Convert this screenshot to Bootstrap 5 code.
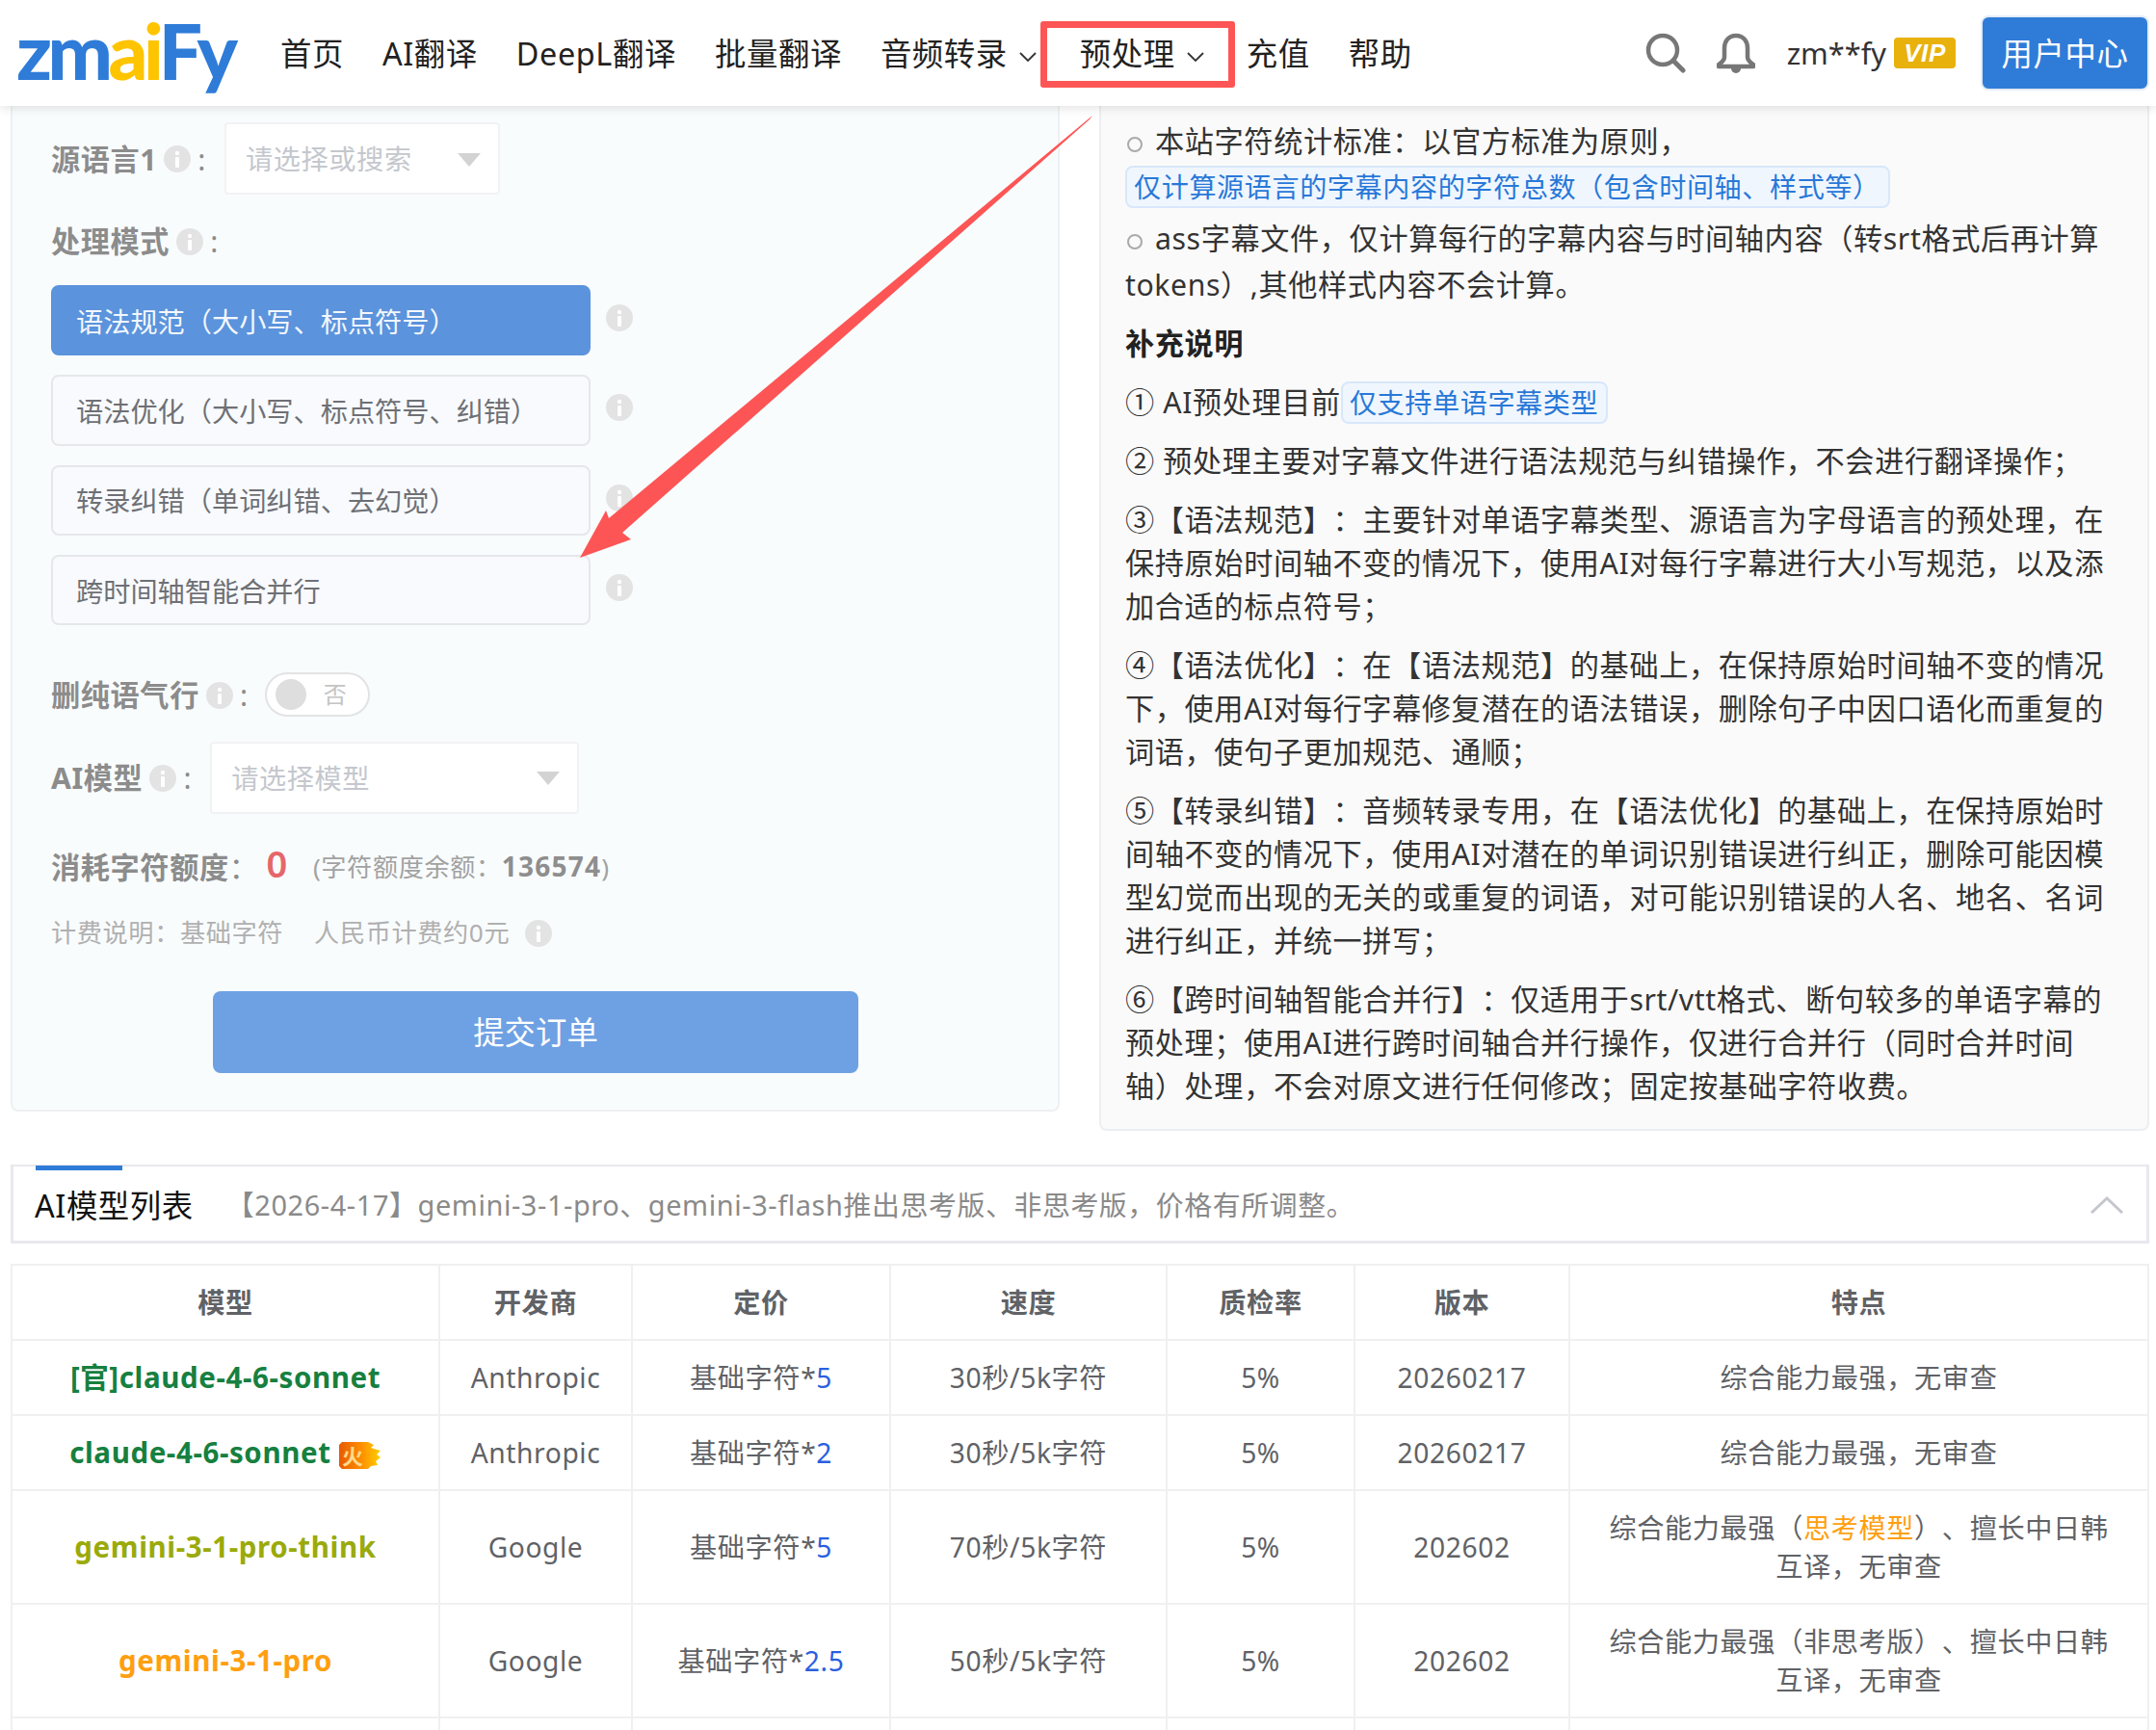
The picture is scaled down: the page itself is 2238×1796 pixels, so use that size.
<!DOCTYPE html>
<html lang="zh-CN">
<head>
<meta charset="UTF-8">
<title>zmaiFy 预处理</title>
<link href="https://cdn.jsdelivr.net/npm/bootstrap@5.3.2/dist/css/bootstrap.min.css" rel="stylesheet">
<style>
  html, body { height: 1796px; overflow: hidden; }
  body { font-family: "Noto Sans", "Noto Sans CJK SC", sans-serif; background: #fff; color: #606266; font-size: 28.2px; letter-spacing: .6px; text-spacing-trim: space-all; position: relative; }

  /* header */
  .top-bar { height: 110px; background: #fff; box-shadow: 0 2px 10px rgba(0,0,0,.12); position: relative; z-index: 2; padding: 0 7px 0 17px; }
  .brand { font-family: Lato, "Liberation Sans", sans-serif; font-weight: 900; font-size: 80px; line-height: 1; letter-spacing: -4.5px; color: #2f7cd8; width: 274px; margin-top: -6px; }
  .brand b { font-weight: 900; color: #ffc400; }
  .menu-link { font-size: 32.4px; color: #222; margin-right: 40px; white-space: nowrap; line-height: 44px; }
  .menu-link svg { margin-left: 12px; }
  .menu-drop { margin-right: 45px; }
  .menu-drop-b { margin-right: 44px; }
  .user-name { font-size: 30.75px; letter-spacing: 0; color: #333; margin: 0 8px 0 33px; }
  .vip-tag { width: 64px; height: 32px; background: #e8b10c; color: #fff; border-radius: 4px; font: italic 700 26px/32px "Liberation Sans", sans-serif; text-align: center; }
  .user-btn { width: 175px; height: 78px; margin-left: 26px; background: #2f7cd8; color: #fff; border: 2px solid #e4ecf6; border-radius: 8px; font-size: 32.4px; line-height: 74px; text-align: center; }

  /* panels */
  .panel-wrap { padding: 0 7px 0 11px; gap: 41px; }
  .form-panel { width: 1089px; height: 1044px; background: #f9fcfd; border: 2px solid #eef0f3; border-top: 0; border-radius: 0 0 8px 8px; padding: 17px 0 0 40px; }
  .help-panel { flex: 1; height: 1064px; background: #fafafa; border: 2px solid #eceef1; border-top: 0; border-radius: 0 0 8px 8px; padding: 14px 26px 0 25px; font-size: 30.2px; line-height: 45px; color: #333; }
  .form-label-x { font-size: 30.2px; font-weight: 700; color: #8c8c8c; white-space: nowrap; display: flex; align-items: center; gap: 7px; padding-top: 2px; }
  .form-label-x i { font-style: normal; font-weight: 400; }
  .form-label-x .colon-tight { margin-left: -7px; }
  .fake-select { height: 75px; margin-left: 19px; background: #fff; border: 2px solid #f1f2f4; border-radius: 4px; padding: 2px 18px 0 20px; color: #c4c7cd; }
  .caret-down { width: 0; height: 0; border: 12px solid transparent; border-top: 14px solid #d3d3d3; border-bottom: 0; }
  .mode-row { height: 73.33px; margin-bottom: 20px; }
  .mode-btn { width: 560px; height: 100%; border: 2px solid #e5e7ea; border-radius: 8px; background: #f8fafd; padding: 2px 0 0 24px; color: #6e7075; }
  .mode-btn.is-on { background: #5b93dc; border-color: #5b93dc; color: #f3f7fd; }
  .tip-dot { flex: none; width: 28px; height: 28px; }
  .mode-row .tip-dot { margin-bottom: 5px; }
  .switch-x { width: 109px; height: 46px; margin-left: 17px; border: 2px solid #e2e3e5; border-radius: 23px; background: #fff; padding: 0 22px 0 9px; font-size: 24px; letter-spacing: 0; color: #c4c4c4; }
  .switch-x span { width: 32px; height: 32px; border-radius: 50%; background: #dedede; }
  .zero-num { color: #e5676b; font-size: 38px; font-weight: 600; margin: -8px 26px 0 8px; line-height: 44px; }
  .balance-note { font-size: 26.2px; color: #a2a2a2; }
  .balance-note b { color: #8e8e8e; font-size: 28px; letter-spacing: 1.2px; }
  .bill-note { font-size: 26.2px; color: #b0b0b0; height: 40px; }
  .submit-x { width: 670px; height: 85px; margin-left: 168px; background: #6ea1e3; color: #fff; border: 0; border-radius: 8px; font-size: 32.4px; }

  /* help text */
  .help-panel p { margin: 0 0 16px; }
  .ring-dot { display: inline-block; width: 16px; height: 16px; border: 2px solid #aaa; border-radius: 50%; margin: 0 13px 0 2px; }
  .blue-chip { display: inline-block; height: 44px; font-size: 28.1px; line-height: 40px; padding: 0 8px 0 7px; background: #f0f6fe; border: 2px solid #d8e7fb; border-radius: 8px; color: #2878d8; white-space: nowrap; }
  .chip-first { margin-top: 3px; }
  .ass-line { line-height: 48px; margin-top: 8px !important; margin-bottom: 14px !important; }
  .help-title { font-weight: 700; color: #222; margin-bottom: 16px !important; }

  /* notice */
  .notice-bar { height: 82px; margin: 35px 7px 0 11px; border: 3px solid #e8e8ee; border-top-width: 2px; padding: 3px 24px 0 22px; position: relative; }
  .notice-bar::before { content: ""; position: absolute; left: 23px; top: -1px; width: 90px; height: 5px; background: #2f7cd8; }
  .notice-title { font-size: 32.4px; color: #111; margin-right: 34px; white-space: nowrap; }
  .notice-text { font-size: 28.9px; color: #8a8a8a; white-space: nowrap; }

  /* table */
  .model-table { width: 2220px; margin: 21px 0 0 11px; table-layout: fixed; border-color: #f0f0f0; --bs-border-width: 2px; }
  .model-table th, .model-table td { padding: 0 30px; text-align: center; vertical-align: middle; color: #606266; line-height: 40px; height: 78px; background: #fff; }
  .model-table th { font-weight: 700; }
  .model-table .tall-row td { height: 118px; }
  .model-table .stub-row td { height: 40px; }
  .model-table th:nth-child(1) { width: 444px; }
  .model-table th:nth-child(2) { width: 200px; }
  .model-table th:nth-child(3) { width: 268px; }
  .model-table th:nth-child(4) { width: 287px; }
  .model-table th:nth-child(5) { width: 195px; }
  .model-table th:nth-child(6) { width: 223px; }
  .model-table .m-name { font-weight: 700; font-size: 29.5px; padding: 0 10px; white-space: nowrap; }
  .m-green { color: #16803f !important; }
  .m-olive { color: #9aaa0a !important; }
  .m-orange { color: #ff9f10 !important; }
  .rate-num { color: #2a5fe0; }
  .think-tag { color: #ff9f10; }
  .fire-tag { vertical-align: -6px; }

  /* red annotation drawn over the page */
  .mark-box { position: absolute; left: 1080px; top: 22px; width: 202px; height: 69px; border: 7px solid #fd5555; border-radius: 3px; z-index: 3; }
  .mark-arrow { position: absolute; left: 0; top: 0; z-index: 3; pointer-events: none; }
</style>
</head>
<body>

<header class="top-bar d-flex align-items-center">
  <div class="brand">zm<b>ai</b>Fy</div>
  <a class="menu-link text-decoration-none">首页</a>
  <a class="menu-link text-decoration-none">AI翻译</a>
  <a class="menu-link text-decoration-none">DeepL翻译</a>
  <a class="menu-link text-decoration-none">批量翻译</a>
  <a class="menu-link menu-drop text-decoration-none">音频转录<svg width="18" height="11" viewBox="0 0 18 11"><path d="M1 1l8 8 8-8" fill="none" stroke="#333" stroke-width="1.8"/></svg></a>
  <a class="menu-link menu-drop-b text-decoration-none">预处理<svg width="18" height="11" viewBox="0 0 18 11"><path d="M1 1l8 8 8-8" fill="none" stroke="#333" stroke-width="1.8"/></svg></a>
  <a class="menu-link text-decoration-none">充值</a>
  <a class="menu-link text-decoration-none">帮助</a>
  <div class="d-flex align-items-center ms-auto">
    <svg width="42" height="42" viewBox="0 0 42 42" class="me-4"><circle cx="18" cy="18" r="15" fill="none" stroke="#777" stroke-width="4.5"/><path d="M29 29l10 10" stroke="#777" stroke-width="5" stroke-linecap="round"/></svg>
    <svg width="40" height="42" viewBox="0 0 40 42" class="ms-2"><path d="M20 3c-8 0-12 6-12 13v9c0 3-3 6-6 8v2h36v-2c-3-2-6-5-6-8v-9c0-7-4-13-12-13z" fill="none" stroke="#777" stroke-width="4.5" stroke-linejoin="round"/><path d="M15 37a5 5 0 0 0 10 0z" fill="#777"/></svg>
    <span class="user-name">zm**fy</span>
    <span class="vip-tag">VIP</span>
    <span class="user-btn">用户中心</span>
  </div>
</header>

<div class="mark-box"></div>
<svg class="mark-arrow" width="1200" height="620" viewBox="0 0 1200 620">
  <path d="M1134 120L1131 124L646 553L655 560L602 579L629 530L632 538Z" fill="#fd5555"/>
</svg>

<div class="panel-wrap d-flex align-items-start">
  <section class="form-panel">
    <div class="d-flex align-items-center">
      <div class="form-label-x">源语言1 <svg class="tip-dot" viewBox="0 0 28 28"><use href="#tip"/></svg><i>:</i></div>
      <div class="fake-select d-flex align-items-center justify-content-between" style="width:286px"><span>请选择或搜索</span><span class="caret-down"></span></div>
    </div>
    <div class="form-label-x" style="height:44px;margin:26px 0 24px">处理模式 <svg class="tip-dot" viewBox="0 0 28 28"><use href="#tip"/></svg><i>:</i></div>
    <div class="mode-row d-flex align-items-center gap-3"><button class="mode-btn is-on text-start">语法规范（大小写、标点符号）</button><svg class="tip-dot" viewBox="0 0 28 28"><use href="#tip"/></svg></div>
    <div class="mode-row d-flex align-items-center gap-3"><button class="mode-btn text-start">语法优化（大小写、标点符号、纠错）</button><svg class="tip-dot" viewBox="0 0 28 28"><use href="#tip"/></svg></div>
    <div class="mode-row d-flex align-items-center gap-3"><button class="mode-btn text-start">转录纠错（单词纠错、去幻觉）</button><svg class="tip-dot" viewBox="0 0 28 28"><use href="#tip"/></svg></div>
    <div class="mode-row d-flex align-items-center gap-3"><button class="mode-btn text-start">跨时间轴智能合并行</button><svg class="tip-dot" viewBox="0 0 28 28"><use href="#tip"/></svg></div>
    <div class="d-flex align-items-center" style="margin-top:48px">
      <div class="form-label-x">删纯语气行 <svg class="tip-dot" viewBox="0 0 28 28"><use href="#tip"/></svg><i>:</i></div>
      <div class="switch-x d-flex align-items-center justify-content-between"><span></span>否</div>
    </div>
    <div class="d-flex align-items-center" style="margin-top:25px">
      <div class="form-label-x">AI模型 <svg class="tip-dot" viewBox="0 0 28 28"><use href="#tip"/></svg><i>:</i></div>
      <div class="fake-select d-flex align-items-center justify-content-between" style="width:383px"><span>请选择模型</span><span class="caret-down"></span></div>
    </div>
    <div class="d-flex align-items-center" style="height:44px;margin-top:33px">
      <div class="form-label-x">消耗字符额度<i class="colon-tight">：</i></div>
      <span class="zero-num">0</span>
      <span class="balance-note">(字符额度余额：<b>136574</b>)</span>
    </div>
    <div class="bill-note d-flex align-items-center" style="margin-top:27px">
      <span>计费说明：基础字符</span><span class="ms-4 ps-2">人民币计费约0元</span><svg class="tip-dot ms-3" viewBox="0 0 28 28"><use href="#tip"/></svg>
    </div>
    <button class="submit-x d-block" style="margin-top:40px">提交订单</button>
  </section>

  <section class="help-panel">
    <p class="mb-0"><span class="ring-dot"></span>本站字符统计标准：以官方标准为原则，</p>
    <span class="blue-chip chip-first">仅计算源语言的字幕内容的字符总数（包含时间轴、样式等）</span>
    <p class="ass-line"><span class="ring-dot"></span>ass字幕文件，仅计算每行的字幕内容与时间轴内容（转srt格式后再计算tokens）,其他样式内容不会计算。</p>
    <p class="help-title">补充说明</p>
    <p>① AI预处理目前<span class="blue-chip">仅支持单语字幕类型</span></p>
    <p>② 预处理主要对字幕文件进行语法规范与纠错操作，不会进行翻译操作；</p>
    <p>③【语法规范】：主要针对单语字幕类型、源语言为字母语言的预处理，在保持原始时间轴不变的情况下，使用AI对每行字幕进行大小写规范，以及添加合适的标点符号；</p>
    <p>④【语法优化】：在【语法规范】的基础上，在保持原始时间轴不变的情况下，使用AI对每行字幕修复潜在的语法错误，删除句子中因口语化而重复的词语，使句子更加规范、通顺；</p>
    <p>⑤【转录纠错】：音频转录专用，在【语法优化】的基础上，在保持原始时间轴不变的情况下，使用AI对潜在的单词识别错误进行纠正，删除可能因模型幻觉而出现的无关的或重复的词语，对可能识别错误的人名、地名、名词进行纠正，并统一拼写；</p>
    <p>⑥【跨时间轴智能合并行】：仅适用于srt/vtt格式、断句较多的单语字幕的预处理；使用AI进行跨时间轴合并行操作，仅进行合并行（同时合并时间轴）处理，不会对原文进行任何修改；固定按基础字符收费。</p>
  </section>
</div>

<div class="notice-bar d-flex align-items-center">
  <span class="notice-title">AI模型列表</span>
  <span class="notice-text">【2026-4-17】gemini-3-1-pro、gemini-3-flash推出思考版、非思考版，价格有所调整。</span>
  <svg class="ms-auto" width="34" height="18" viewBox="0 0 34 18"><path d="M1 17L17 2l16 15" fill="none" stroke="#c4c7cc" stroke-width="3"/></svg>
</div>

<table class="table table-bordered model-table mb-0">
  <thead>
    <tr><th>模型</th><th>开发商</th><th>定价</th><th>速度</th><th>质检率</th><th>版本</th><th>特点</th></tr>
  </thead>
  <tbody>
    <tr><td class="m-name m-green">[官]claude-4-6-sonnet</td><td>Anthropic</td><td>基础字符*<span class="rate-num">5</span></td><td>30秒/5k字符</td><td>5%</td><td>20260217</td><td>综合能力最强，无审查</td></tr>
    <tr><td class="m-name m-green">claude-4-6-sonnet
      <svg class="fire-tag" width="44" height="28" viewBox="0 0 44 28"><defs><linearGradient id="fire" x1="0" x2="1" y1="0" y2="0"><stop offset="0" stop-color="#e85a00"/><stop offset=".55" stop-color="#ff9000"/><stop offset="1" stop-color="#ffd000"/></linearGradient></defs><path d="M3 0H30L36 3L33 6L43 9L39 13L43 16L38 20L40 24L33 25L30 28H3L0 25V3Z" fill="url(#fire)"/><text x="3" y="23" font-size="22" fill="#ffd98a">火</text></svg></td><td>Anthropic</td><td>基础字符*<span class="rate-num">2</span></td><td>30秒/5k字符</td><td>5%</td><td>20260217</td><td>综合能力最强，无审查</td></tr>
    <tr class="tall-row"><td class="m-name m-olive">gemini-3-1-pro-think</td><td>Google</td><td>基础字符*<span class="rate-num">5</span></td><td>70秒/5k字符</td><td>5%</td><td>202602</td><td>综合能力最强（<span class="think-tag">思考模型</span>）、擅长中日韩互译，无审查</td></tr>
    <tr class="tall-row"><td class="m-name m-orange">gemini-3-1-pro</td><td>Google</td><td>基础字符*<span class="rate-num">2.5</span></td><td>50秒/5k字符</td><td>5%</td><td>202602</td><td>综合能力最强（非思考版）、擅长中日韩互译，无审查</td></tr>
    <tr class="stub-row"><td></td><td></td><td></td><td></td><td></td><td></td><td></td></tr>
  </tbody>
</table>

<svg width="0" height="0" class="position-absolute">
  <symbol id="tip" viewBox="0 0 28 28"><circle cx="14" cy="14" r="14" fill="#e3e3e3"/><circle cx="14" cy="8" r="2.2" fill="#fff"/><rect x="12" y="12" width="4" height="11" rx="1" fill="#fff"/></symbol>
</svg>

<script src="https://cdn.jsdelivr.net/npm/bootstrap@5.3.2/dist/js/bootstrap.bundle.min.js"></script>
</body>
</html>
